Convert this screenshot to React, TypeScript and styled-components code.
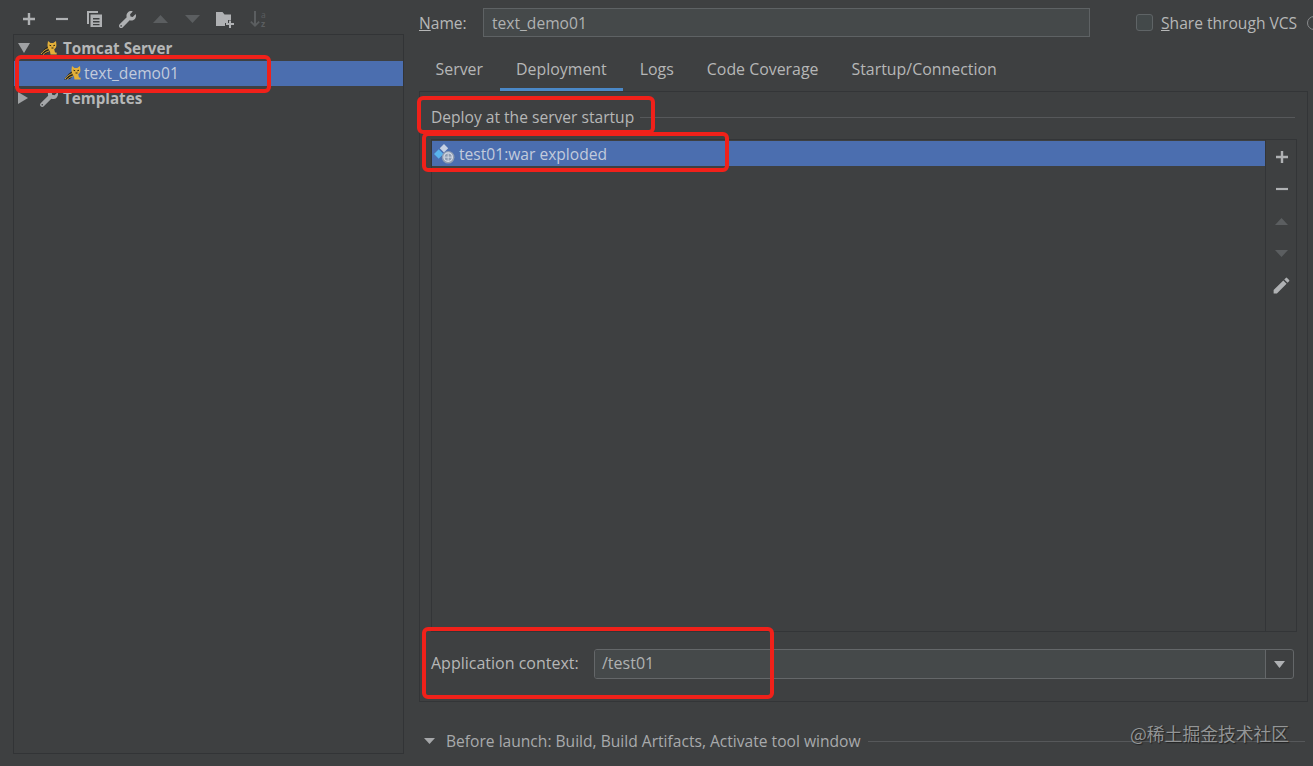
import React from "react";
import styled, { createGlobalStyle } from "styled-components";
import { FaWrench } from "react-icons/fa";
import { MdEdit } from "react-icons/md";

const Global = createGlobalStyle`
  html, body { margin: 0; padding: 0; background: #3e4041; }
  body { width: 1313px; height: 766px; overflow: hidden; }
  #root { height: 766px; }
`;

const Page = styled.div`
  position: relative;
  width: 1313px;
  height: 766px;
  overflow: hidden;
  display: flex;
  background: #3e4041;
  color: #b6b7b7;
  font-family: "Open Sans", "Noto Sans", sans-serif;
  font-size: 15.6px;
`;

const LeftPane = styled.div`
  width: 404px;
  flex: none;
  padding: 0 0 12px 13px;
  box-sizing: border-box;
  display: flex;
  flex-direction: column;
`;

const Toolbar = styled.div`
  height: 34px;
  flex: none;
  display: flex;
  align-items: center;
  padding-top: 4px;
  box-sizing: border-box;
`;

const ToolButton = styled.span<{ $dim?: boolean }>`
  width: 32.7px;
  height: 22px;
  flex: none;
  display: flex;
  align-items: center;
  justify-content: center;
  color: ${(p) => (p.$dim ? "#5b5e60" : "#afb1b3")};
`;

const Tree = styled.div`
  flex: 1;
  border: 1px solid #323436;
  padding-top: 1px;
`;

const TreeRow = styled.div<{ $selected?: boolean; $indent: number; $bold?: boolean }>`
  height: 25px;
  box-sizing: border-box;
  padding-bottom: 2px;
  display: flex;
  align-items: center;
  padding-left: ${(p) => p.$indent}px;
  background: ${(p) => (p.$selected ? "#4b6eaf" : "transparent")};
  font-weight: ${(p) => (p.$bold ? 700 : 400)};
  font-size: ${(p) => (p.$bold ? 15.2 : 15.6)}px;
  color: ${(p) => (p.$selected ? "#c2cbdc" : "#b6b7b7")};
`;

const Chevron = styled.span`
  width: 22px;
  flex: none;
  display: flex;
  align-items: center;
`;

const NodeIcon = styled.span<{ $w: number }>`
  width: ${(p) => p.$w}px;
  flex: none;
  display: flex;
  align-items: center;
`;

const RightPane = styled.div`
  margin-left: 15px;
  width: 889px;
  flex: none;
  padding-top: 8px;
  box-sizing: border-box;
  display: flex;
  flex-direction: column;
`;

const NameRow = styled.div`
  height: 29px;
  flex: none;
  display: flex;
  align-items: center;
  white-space: nowrap;
  line-height: 27px;
`;

const NameLabel = styled.label`
  width: 64px;
  flex: none;
  padding-top: 2px;
`;

const NameField = styled.div`
  width: 607px;
  height: 29px;
  flex: none;
  box-sizing: border-box;
  border: 1px solid #5e6264;
  background: #45494a;
  padding: 1px 0 0 8px;
  display: flex;
  align-items: center;
  color: #b0b2b2;
  margin-right: 46px;
`;

const CheckBox = styled.span`
  width: 17px;
  height: 17px;
  flex: none;
  box-sizing: border-box;
  border: 1px solid #5f6466;
  border-radius: 3px;
  background: #43494a;
  margin-right: 8px;
`;

const ShareLabel = styled.span`
  margin-right: 10px;
  padding-top: 2px;
`;

const HelpCircle = styled.span`
  width: 14px;
  height: 14px;
  flex: none;
  box-sizing: border-box;
  border: 1.5px solid #8a8c8e;
  border-radius: 50%;
`;

const TabBar = styled.div`
  margin-top: 10px;
  height: 44px;
  flex: none;
  display: flex;
  font-size: 15.9px;
`;

const Tab = styled.div<{ $active?: boolean }>`
  padding: 2px 16.5px 0;
  height: 44px;
  box-sizing: border-box;
  display: flex;
  align-items: center;
  white-space: nowrap;
  border-bottom: 3px solid ${(p) => (p.$active ? "#4a88c7" : "transparent")};
`;

const Panel = styled.div`
  height: 611px;
  flex: none;
  box-sizing: border-box;
  border: 1px solid #333537;
  padding: 13px 10px 22px 11px;
  display: flex;
  flex-direction: column;
`;

const SectionTitle = styled.div`
  height: 24px;
  flex: none;
  display: flex;
  align-items: center;
  gap: 6px;
  margin-bottom: 10px;
  margin-right: 2px;
  white-space: nowrap;
`;

const Rule = styled.span`
  flex: 1;
  height: 1px;
  background: #56585a;
`;

const DeployBox = styled.div`
  flex: 1;
  display: flex;
  box-sizing: border-box;
  border: 1px solid #333537;
  min-height: 0;
`;

const DeployList = styled.div`
  flex: 1;
  border-right: 1px solid #333537;
  padding-top: 1px;
`;

const DeployRow = styled.div`
  height: 25px;
  box-sizing: border-box;
  padding-left: 2px;
  background: #4b6eaf;
  display: flex;
  align-items: center;
  color: #c2cbdc;
`;

const SideBar = styled.div`
  width: 30px;
  flex: none;
  display: flex;
  flex-direction: column;
  align-items: center;
  padding: 1px 0 0 1px;
  box-sizing: border-box;
`;

const SideButton = styled.span`
  height: 32.2px;
  width: 100%;
  display: flex;
  align-items: center;
  justify-content: center;
  color: #afb1b3;
`;

const ContextRow = styled.div`
  height: 30px;
  flex: none;
  margin-top: 17px;
  margin-right: 3px;
  display: flex;
  align-items: center;
  white-space: nowrap;
  font-size: 16px;
`;

const ContextLabel = styled.span`
  width: 163px;
  flex: none;
  padding-bottom: 2px;
`;

const Combo = styled.div`
  flex: 1;
  height: 30px;
  box-sizing: border-box;
  border: 1px solid #646769;
  border-radius: 3px;
  display: flex;
  overflow: hidden;
`;

const ComboInput = styled.div`
  flex: 1;
  background: #45494a;
  padding: 0 0 2px 7px;
  display: flex;
  align-items: center;
  color: #b0b2b2;
  border-right: 1px solid #646769;
`;

const ComboArrow = styled.div`
  width: 27px;
  flex: none;
  display: flex;
  align-items: center;
  justify-content: center;
`;

const BeforeLaunch = styled.div`
  margin-top: 27px;
  height: 24px;
  flex: none;
  display: flex;
  align-items: center;
  padding-left: 5px;
  margin-right: 3px;
  white-space: nowrap;
  color: #a8aaac;
`;

const LaunchText = styled.span`
  margin: 0 7px 0 11px;
`;

const RedFrame = styled.div<{ $x: number; $y: number; $w: number; $h: number }>`
  position: absolute;
  left: ${(p) => p.$x}px;
  top: ${(p) => p.$y}px;
  width: ${(p) => p.$w}px;
  height: ${(p) => p.$h}px;
  box-sizing: border-box;
  border: 4px solid #f0211a;
  border-radius: 6px;
  pointer-events: none;
`;

const Watermark = styled.div`
  position: absolute;
  left: 1130px;
  top: 720px;
  font-family: "Noto Sans CJK SC", "Noto Sans", sans-serif;
  font-size: 17.8px;
  line-height: 26px;
  color: rgba(165, 167, 168, 0.85);
  text-shadow: 1px 1px 1px rgba(20, 20, 20, 0.7);
  white-space: nowrap;
`;

const Plus = ({ s = 14 }: { s?: number }) => (
  <svg width={s} height={s} viewBox="0 0 14 14"><path d="M5.8 1h2.4v4.8H13v2.4H8.2V13H5.8V8.2H1V5.8h4.800z" fill="#afb1b3" /></svg>
);
const Minus = ({ s = 14 }: { s?: number }) => (
  <svg width={s} height={s} viewBox="0 0 14 14"><path d="M1 5.900h12v2.200H1z" fill="#afb1b3" /></svg>
);
const Copy = () => (
  <svg width="17" height="18" viewBox="0 0 17 18">
    <path d="M1 1h11v2H3v11H1z" fill="#afb1b3" />
    <path fillRule="evenodd" d="M4.500 4.500H16V17H4.500zM7 8v1.400h6.500V8zM7 11v1.400h6.500V11zM7 14v1.200h6.500V14z" fill="#afb1b3" />
  </svg>
);
const Tri = ({ up, c, w = 15, h = 8 }: { up?: boolean; c: string; w?: number; h?: number }) => (
  <svg width={w} height={h} viewBox="0 0 15 8" preserveAspectRatio="none"><path d={up ? "M7.500 0L15 8H0z" : "M0 0h15L7.500 8z"} fill={c} /></svg>
);
const FolderPlus = () => (
  <svg width="19" height="17" viewBox="0 0 19 17">
    <path d="M0 1h6.500l2 2.500H15V9h-3v3H9v3H0z" fill="#afb1b3" />
    <path d="M13 9.500h2v2.600h3v2h-3V17h-2v-2.900h-3v-2h3z" fill="#afb1b3" />
  </svg>
);
const SortIcon = () => (
  <svg width="17" height="19" viewBox="0 0 17 19">
    <path d="M4 1h2v12.500l2.600-2.600 1.200 1.300L5 17 .2 12.200l1.200-1.300L4 13.500z" fill="#5b5e60" />
    <text x="11" y="7.500" fontSize="8.500" fill="#5b5e60" fontFamily="Open Sans, sans-serif">a</text>
    <text x="11" y="17" fontSize="8.500" fontWeight="700" fill="#5b5e60" fontFamily="Open Sans, sans-serif">z</text>
  </svg>
);
const Tomcat = () => (
  <svg width="17" height="14" viewBox="0 0 17 14">
    <path d="M0 13.500L5 7.500 9 4.500l1 4-4 4.500z" fill="#26241c" />
    <path d="M1 13c2-2.500 4-4.500 7.500-5.500M3 13.500c2-1.500 3.500-3 6-3.500" stroke="#d9a93a" strokeWidth="1" fill="none" />
    <path d="M7.500 3.500L8 0l2.500 2h2.800L16 0l.4 3.800c.2 2.300-.9 3.700-2.200 4.400l.8 3.300h1.500l.3 2H10.500L10 10.500C8.500 8.500 7.200 6 7.500 3.500z" fill="#e3b03a" />
    <path d="M9.500 4.200l1.700.6M15 4.200l-1.700.6M11.500 7h2" stroke="#2b2210" strokeWidth="1" />
  </svg>
);
const Artifact = () => (
  <svg width="21" height="21" viewBox="0 0 20 20">
    <path d="M4.500 6L9 10.500 4.500 15 0 10.500z" fill="#59b4ec" />
    <path d="M9.500 1L13.500 5 9.500 9 5.500 5z" fill="#c5d0e2" />
    <circle cx="13.500" cy="13.500" r="6" fill="#8f9db2" />
    <circle cx="13.500" cy="13.500" r="4" fill="none" stroke="#d7dde8" strokeWidth="1.200" />
    <path d="M10 13.500h7M13.500 10v7" stroke="#d7dde8" strokeWidth=".8" />
  </svg>
);

export default function App() {
  return (
    <Page>
      <Global />
      <LeftPane>
        <Toolbar>
          <ToolButton><Plus /></ToolButton>
          <ToolButton><Minus /></ToolButton>
          <ToolButton><Copy /></ToolButton>
          <ToolButton><FaWrench size={17} /></ToolButton>
          <ToolButton><Tri up c="#5b5e60" /></ToolButton>
          <ToolButton><Tri c="#5b5e60" /></ToolButton>
          <ToolButton><FolderPlus /></ToolButton>
          <ToolButton $dim><SortIcon /></ToolButton>
        </Toolbar>
        <Tree>
          <TreeRow $indent={4} $bold>
            <Chevron><Tri c="#9fa1a3" w={12} h={10} /></Chevron>
            <NodeIcon $w={23}><Tomcat /></NodeIcon>
            Tomcat Server
          </TreeRow>
          <TreeRow $indent={50} $selected>
            <NodeIcon $w={20}><Tomcat /></NodeIcon>
            text_demo01
          </TreeRow>
          <TreeRow $indent={4} $bold>
            <Chevron>
              <svg width="10" height="12" viewBox="0 0 10 12"><path d="M0 0l10 6-10 6z" fill="#9fa1a3" /></svg>
            </Chevron>
            <NodeIcon $w={23}><FaWrench size={18} color="#a5a7a9" /></NodeIcon>
            Templates
          </TreeRow>
        </Tree>
      </LeftPane>
      <RightPane>
        <NameRow>
          <NameLabel><u>N</u>ame:</NameLabel>
          <NameField>text_demo01</NameField>
          <CheckBox />
          <ShareLabel><u>S</u>hare through VCS</ShareLabel>
          <HelpCircle />
        </NameRow>
        <TabBar>
          <Tab>Server</Tab>
          <Tab $active>Deployment</Tab>
          <Tab>Logs</Tab>
          <Tab>Code Coverage</Tab>
          <Tab>Startup/Connection</Tab>
        </TabBar>
        <Panel>
          <SectionTitle>Deploy at the server startup<Rule /></SectionTitle>
          <DeployBox>
            <DeployList>
              <DeployRow>
                <NodeIcon $w={25}><Artifact /></NodeIcon>
                test01:war exploded
              </DeployRow>
            </DeployList>
            <SideBar>
              <SideButton><Plus /></SideButton>
              <SideButton><Minus /></SideButton>
              <SideButton><Tri up c="#5b5e60" w={13} h={7} /></SideButton>
              <SideButton><Tri c="#5b5e60" w={13} h={7} /></SideButton>
              <SideButton><MdEdit size={21} /></SideButton>
            </SideBar>
          </DeployBox>
          <ContextRow>
            <ContextLabel>Application context:</ContextLabel>
            <Combo>
              <ComboInput>/test01</ComboInput>
              <ComboArrow><Tri c="#afb1b3" w={11} h={7} /></ComboArrow>
            </Combo>
          </ContextRow>
        </Panel>
        <BeforeLaunch>
          <Tri c="#a5a7a9" w={11} h={6} />
          <LaunchText>Before launch: Build, Build Artifacts, Activate tool window</LaunchText>
          <Rule />
        </BeforeLaunch>
      </RightPane>
      <RedFrame $x={15} $y={55} $w={256} $h={38} />
      <RedFrame $x={417} $y={96} $w={238} $h={38} />
      <RedFrame $x={422} $y={132} $w={307} $h={40} />
      <RedFrame $x={422} $y={627} $w={352} $h={72} />
      <Watermark>@稀土掘金技术社区</Watermark>
    </Page>
  );
}
